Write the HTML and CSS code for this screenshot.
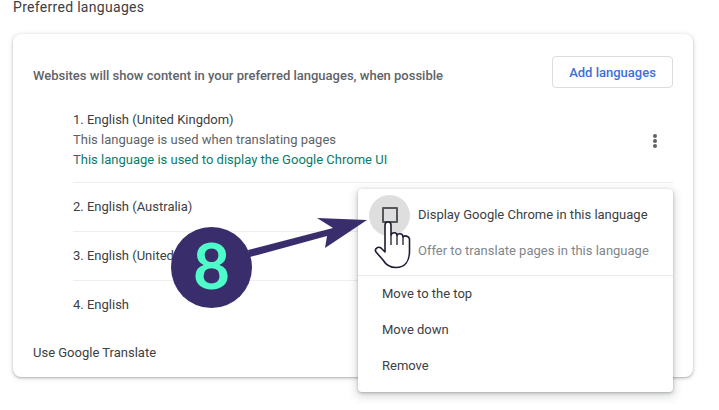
FILE: index.html
```html
<!DOCTYPE html>
<html lang="en">
<head>
<meta charset="utf-8">
<title>Preferred languages</title>
<link rel="stylesheet" href="styles.css">
</head>
<body>
<h2 class="title">Preferred languages</h2>
<section class="card">
  <div class="head">
    <span class="head-text">Websites will show content in your preferred languages, when possible</span>
    <button class="add">Add languages</button>
  </div>
  <div class="list">
    <div class="row first">
      <div>
        <div class="name">1. English (United Kingdom)</div>
        <div class="note">This language is used when translating pages</div>
        <div class="note ui">This language is used to display the Google Chrome UI</div>
      </div>
      <span class="more"><i></i><i></i><i></i></span>
    </div>
    <div class="row"><div class="name">2. English (Australia)</div></div>
    <div class="row"><div class="name">3. English (United States)</div></div>
    <div class="row"><div class="name">4. English</div></div>
  </div>
  <div class="translate">Use Google Translate</div>
</section>

<div class="menu">
  <div class="opt"><span class="halo"><span class="box"></span></span><span>Display Google Chrome in this language</span></div>
  <div class="opt off"><span class="halo-space"></span><span>Offer to translate pages in this language</span></div>
  <div class="sep"></div>
  <div class="item">Move to the top</div>
  <div class="item">Move down</div>
  <div class="item">Remove</div>
</div>

<svg class="arrow" width="130" height="50" viewBox="240 210 130 50">
  <path d="M248 250 L333 228 L317 218 L367 220 L325 248 L327 236 L250 257 Z" fill="#3a2d6b"/>
</svg>
<div class="badge">8</div>
<svg class="hand" width="38" height="50" viewBox="0 0 38 50">
  <path d="M11 4 C11 0 17 0 17 4 L17 14 C18 11 23 11 23 14.500 C24 12 29 12 29 16 C30 14 35 15 35.500 18 L35.500 30 C35.500 40 31 46.500 22 46.500 C16 46.500 12 44 9 39 L2 31 C0 28 4 25 7 27 L11 31 Z" fill="#fff" stroke="#1d1b33" stroke-width="1.6" stroke-linejoin="round"/>
  <path d="M17 14 V24 M23 14.500 V24 M29 16 V24" fill="none" stroke="#1d1b33" stroke-width="1.3"/>
</svg>
</body>
</html>
```

FILE: styles.css
```css
html, body { margin: 0; padding: 0; }
body {
  width: 719px;
  height: 410px;
  overflow: hidden;
  position: relative;
  background: #fff;
  font-family: Roboto, "Liberation Sans", sans-serif;
  font-size: 13px;
  color: #202124;
}
.title {
  margin: 0;
  padding: 0 0 0 13px;
  height: 34px;
  line-height: 15px;
  font-size: 14px;
  font-weight: 400;
  letter-spacing: 0.3px;
  color: #3c4043;
}
.card {
  width: 680px;
  height: 343px;
  margin-left: 13px;
  box-sizing: border-box;
  padding: 22px 20px 0;
  background: #fff;
  border-radius: 8px;
  box-shadow: 0 1px 2px rgba(60,64,67,.3), 0 1px 4px 1px rgba(60,64,67,.15);
}
.head {
  display: flex;
  justify-content: space-between;
  align-items: center;
  height: 32px;
}
.head-text { font-weight: 500; color: #5f6368; padding-top: 7px; }
.add {
  width: 121px;
  height: 32px;
  padding: 0;
  background: #fff;
  border: 1px solid #dadce0;
  border-radius: 4px;
  font: 500 13px Roboto, sans-serif;
  color: #3c6fdc;
}
.list { margin-left: 40px; padding-top: 22px; }
.row {
  height: 49px;
  display: flex;
  align-items: center;
  justify-content: space-between;
  border-top: 1px solid #eeeeee;
  box-sizing: border-box;
  line-height: 20px;
}
.row.first { border-top: 0; height: 72px; padding: 0 16px 12px 0; }
.name { color: #3c4043; }
.note { color: #5f6368; }
.note.ui { color: #0b7a6b; }
.more { display: flex; flex-direction: column; gap: 1px; margin-top: 1px; }
.more i { width: 4px; height: 4px; border-radius: 50%; background: #5f6368; }
.translate { padding-top: 14px; line-height: 20px; color: #3c4043; }
.menu {
  position: absolute;
  left: 358px;
  top: 189px;
  width: 315px;
  height: 203px;
  background: #fff;
  border-radius: 4px;
  box-shadow: 0 1px 3px rgba(60,64,67,.35), 0 3px 8px 2px rgba(60,64,67,.18);
  display: flex;
  flex-direction: column;
  padding-top: 7px;
  box-sizing: border-box;
}
.opt {
  display: flex;
  align-items: center;
  height: 36px;
  color: #3c4043;
}
.opt.off { color: #80868b; }
.halo, .halo-space {
  width: 41px;
  height: 41px;
  margin: -1px 8px -3px 11px;
  flex: none;
  display: flex;
  align-items: center;
  justify-content: center;
}
.halo { border-radius: 50%; background: #dedede; }
.box {
  width: 12px;
  height: 12px;
  border: 2px solid #54585c;
  border-radius: 1px;
}
.sep { height: 1px; background: #e8eaed; margin-top: 7px; margin-bottom: 0; }
.item { height: 36px; line-height: 36px; padding-left: 24px; color: #3c4043; }
.arrow { position: absolute; left: 240px; top: 210px; }
.badge {
  position: absolute;
  left: 171px;
  top: 227px;
  width: 81px;
  height: 81px;
  border-radius: 50%;
  background: #3a2d6b;
  color: #4dfcc8;
  font: 700 64px/75px Lato, sans-serif;
  text-align: center;
}
.hand { position: absolute; left: 374px; top: 221px; }
```
